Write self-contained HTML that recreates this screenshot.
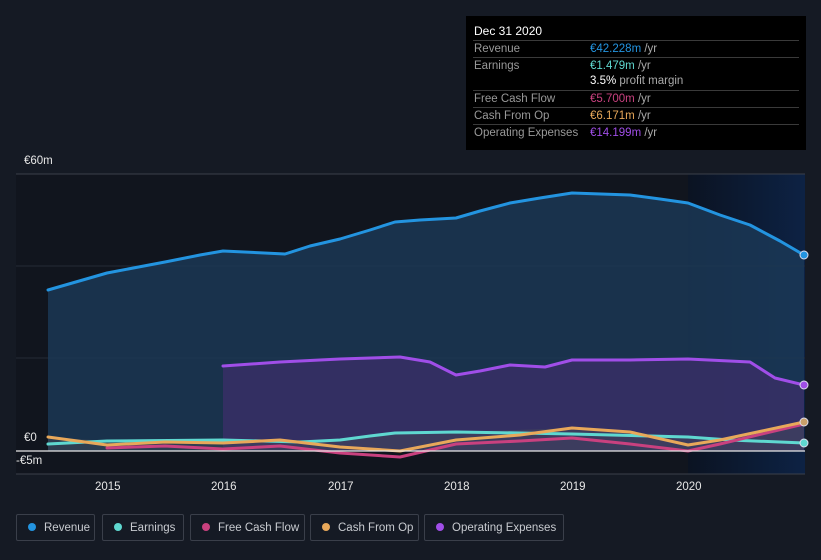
<!DOCTYPE html>
<html><head><meta charset="utf-8"><style>
body{margin:0;width:821px;height:560px;background:#151a24;font-family:"Liberation Sans",sans-serif;overflow:hidden;position:relative}
.tt{position:absolute;left:466px;top:16px;width:340px;height:134px;background:#000;color:#fff;font-size:11.5px}
.tt .h{position:absolute;left:8px;top:8px;font-size:12px}
.row{position:absolute;left:7px;width:326px;border-top:1px solid #3a3a3a;height:16px;line-height:16px}
.row .l{position:absolute;left:1px;color:#999}
.row .v{position:absolute;left:117px;color:#aaa}
.row .v b{font-weight:normal}
.leg{position:absolute;top:514px;height:27px;border:1px solid #3a3f4a;border-radius:2px;color:#c8cbd0;font-size:11.5px;line-height:26px;box-sizing:border-box}
.leg i{display:inline-block;width:8px;height:8px;border-radius:50%;margin:0 8px 0 11px;vertical-align:0px}
.ax{position:absolute;color:#e6e6e6;font-size:11.5px}
</style></head><body>
<svg width="821" height="560" style="position:absolute;left:0;top:0">
<defs>
<linearGradient id="hl" x1="0" x2="1"><stop offset="0" stop-color="#0b1322"/><stop offset="1" stop-color="#0d2244"/></linearGradient>
</defs>
<rect x="16" y="174" width="789" height="300" fill="#11151e"/>
<rect x="688" y="174" width="117" height="300" fill="url(#hl)"/>
<line x1="16" y1="174" x2="805" y2="174" stroke="#3b404a"/>
<line x1="16" y1="266" x2="805" y2="266" stroke="#252b36"/>
<line x1="16" y1="358" x2="805" y2="358" stroke="#252b36"/>
<polygon fill="#1c3a58" fill-opacity="0.8" points="48,451 48,290 107,273 165,262 200,255 223,251 285,254 310,246 340,239 370,230 395,222 420,220 456,218 480,211 510,203 540,198 572,193 630,195 660,199 688,203 720,215 750,225 780,241 804,255 804,451"/>
<polygon fill="#3c2f6a" fill-opacity="0.75" points="223,451 223,366 280,362 340,359 400,357 430,362 456,375 480,371 510,365 545,367 572,360 630,360 688,359 750,362 775,378 804,385 804,451"/>
<polygon fill="#4a4f5a" fill-opacity="0.4" points="48,451 48,437 107,441 223,440 340,440 395,433 456,432 572,428 630,432 688,437 720,440 804,422 804,451"/>
<g fill="none" stroke-width="3" stroke-linejoin="round" stroke-linecap="round">
<polyline stroke="#2394e0" points="48,290 107,273 165,262 200,255 223,251 285,254 310,246 340,239 370,230 395,222 420,220 456,218 480,211 510,203 540,198 572,193 630,195 660,199 688,203 720,215 750,225 780,241 804,255"/>
<polyline stroke="#a04ee8" points="223,366 280,362 340,359 400,357 430,362 456,375 480,371 510,365 545,367 572,360 630,360 688,359 750,362 775,378 804,385"/>
<polyline stroke="#5fd8d0" points="48,444 107,441 223,440 300,442 340,440 370,436 395,433 456,432 520,433 572,434 688,437 730,440 804,443"/>
<polyline stroke="#c9417f" points="107,448 165,446 223,449 280,446 340,453 400,457 456,444 520,441 572,438 630,444 688,451 720,444 804,424"/>
<polyline stroke="#e8a85a" points="48,437 107,445 165,442 223,443 280,440 340,447 400,451 456,440 520,435 572,428 630,432 688,445 720,440 804,422"/>
</g>
<line x1="16" y1="451" x2="805" y2="451" stroke="#e8e8e8" stroke-width="1.2"/>
<line x1="16" y1="474" x2="805" y2="474" stroke="#3b404a"/>
<circle cx="804" cy="255" r="4" fill="#2394e0" stroke="#dde" stroke-width="1"/>
<circle cx="804" cy="385" r="4" fill="#a04ee8" stroke="#dde" stroke-width="1"/>
<circle cx="804" cy="422" r="4" fill="#c9a06a" stroke="#dde" stroke-width="1"/>
<circle cx="804" cy="443" r="4" fill="#5fd8d0" stroke="#dde" stroke-width="1"/>
</svg>
<div class="ax" style="left:24px;top:155px">€60m</div>
<div class="ax" style="left:24px;top:432px">€0</div>
<div class="ax" style="left:16px;top:455px">-€5m</div>
<div class="ax" style="left:95px;top:481px">2015</div>
<div class="ax" style="left:211px;top:481px">2016</div>
<div class="ax" style="left:328px;top:481px">2017</div>
<div class="ax" style="left:444px;top:481px">2018</div>
<div class="ax" style="left:560px;top:481px">2019</div>
<div class="ax" style="left:676px;top:481px">2020</div>
<div class="tt">
<div class="h">Dec 31 2020</div>
<div class="row" style="top:24px"><span class="l">Revenue</span><span class="v"><b style="color:#2394e0">€42.228m</b> /yr</span></div>
<div class="row" style="top:41px"><span class="l">Earnings</span><span class="v"><b style="color:#5fd8d0">€1.479m</b> /yr</span></div>
<div class="row" style="top:57px;border-top:none"><span class="v"><b style="color:#fff">3.5%</b> profit margin</span></div>
<div class="row" style="top:74px"><span class="l">Free Cash Flow</span><span class="v"><b style="color:#c9417f">€5.700m</b> /yr</span></div>
<div class="row" style="top:91px"><span class="l">Cash From Op</span><span class="v"><b style="color:#e8a85a">€6.171m</b> /yr</span></div>
<div class="row" style="top:108px"><span class="l">Operating Expenses</span><span class="v"><b style="color:#a04ee8">€14.199m</b> /yr</span></div>
</div>
<div class="leg" style="left:16px;width:79px"><i style="background:#2394e0"></i>Revenue</div>
<div class="leg" style="left:102px;width:82px"><i style="background:#5fd8d0"></i>Earnings</div>
<div class="leg" style="left:190px;width:115px"><i style="background:#c9417f"></i>Free Cash Flow</div>
<div class="leg" style="left:310px;width:109px"><i style="background:#e8a85a"></i>Cash From Op</div>
<div class="leg" style="left:424px;width:140px"><i style="background:#a04ee8"></i>Operating Expenses</div>
</body></html>
